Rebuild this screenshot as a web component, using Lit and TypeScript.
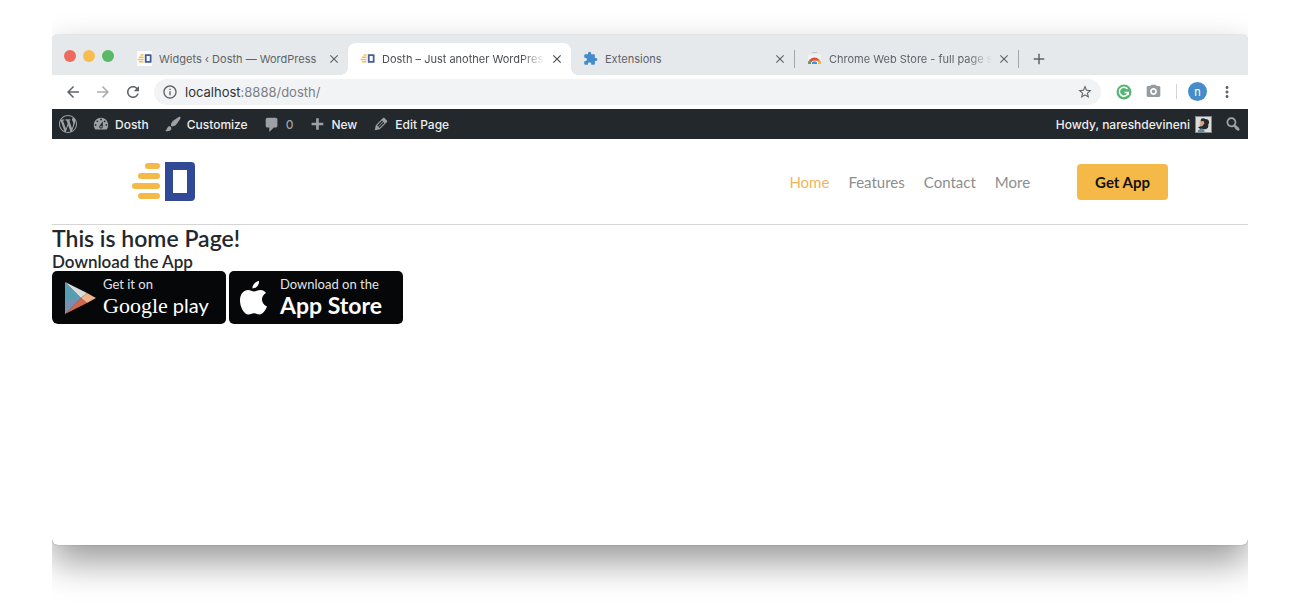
import { LitElement, html, css, svg } from "lit";
import { customElement } from "lit/decorators.js";

const paths = {
  back: "M20 11H7.83l5.59-5.59L12 4l-8 8 8 8 1.41-1.41L7.83 13H20v-2z",
  forward: "M12 4l-1.41 1.41L16.17 11H4v2h12.17l-5.58 5.59L12 20l8-8z",
  reload: "M17.65 6.35C16.2 4.9 14.21 4 12 4c-4.42 0-7.99 3.58-7.99 8s3.57 8 7.99 8c3.73 0 6.84-2.55 7.73-6h-2.08c-.82 2.33-3.04 4-5.65 4-3.31 0-6-2.69-6-6s2.69-6 6-6c1.66 0 3.14.69 4.22 1.78L13 11h7V4l-2.35 2.35z",
  info: "M11 17h2v-6h-2v6zm1-15C6.48 2 2 6.48 2 12s4.48 10 10 10 10-4.48 10-10S17.52 2 12 2zm0 18c-4.41 0-8-3.59-8-8s3.59-8 8-8 8 3.59 8 8-3.59 8-8 8zM11 9h2V7h-2v2z",
  star: "M22 9.24l-7.19-.62L12 2 9.19 8.63 2 9.24l5.46 4.73L5.82 21 12 17.27 18.18 21l-1.63-7.03L22 9.24zM12 15.4l-3.76 2.27 1-4.28-3.32-2.88 4.38-.38L12 6.1l1.71 4.04 4.38.38-3.32 2.88 1 4.28L12 15.4z",
  camera: "M9 2L7.17 4H4c-1.1 0-2 .9-2 2v12c0 1.1.9 2 2 2h16c1.1 0 2-.9 2-2V6c0-1.1-.9-2-2-2h-3.17L15 2H9zm3 15c-2.76 0-5-2.24-5-5s2.24-5 5-5 5 2.24 5 5-2.24 5-5 5zM12 9.500a2.500 2.500 0 1 0 0 5a2.500 2.500 0 1 0 0-5z",
  puzzle: "M20.5 11H19V7c0-1.100-.9-2-2-2h-4V3.500a2.500 2.500 0 0 0-5 0V5H4c-1.100 0-2 .9-2 2v3.800h1.500c1.500 0 2.700 1.200 2.700 2.700S5 16.200 3.500 16.200H2V20c0 1.100.9 2 2 2h3.800v-1.500c0-1.500 1.200-2.700 2.700-2.700s2.700 1.200 2.700 2.700V22H17c1.100 0 2-.9 2-2v-4h1.500a2.500 2.500 0 0 0 0-5z",
  close: "M19 6.410L17.590 5 12 10.590 6.410 5 5 6.410 10.590 12 5 17.590 6.410 19 12 13.410 17.590 19 19 17.590 13.410 12z",
  add: "M19 13h-6v6h-2v-6H5v-2h6V5h2v6h6v2z",
  menu: "M12 8c1.100 0 2-.9 2-2s-.9-2-2-2-2 .9-2 2 .9 2 2 2zm0 2c-1.100 0-2 .9-2 2s.9 2 2 2 2-.9 2-2-.9-2-2-2zm0 6c-1.100 0-2 .9-2 2s.9 2 2 2 2-.9 2-2-.9-2-2-2z",
};

const dashicons = {
  wordpress: "M20 10c0-5.51-4.49-10-10-10C4.48 0 0 4.49 0 10c0 5.52 4.48 10 10 10 5.51 0 10-4.48 10-10zM7.78 15.37L4.37 6.22c.55-.02 1.17-.08 1.17-.08.5-.06.44-1.13-.06-1.11 0 0-1.45.11-2.37.11-.18 0-.37 0-.58-.01C4.12 2.69 6.87 1.11 10 1.11c2.33 0 4.45.87 6.05 2.34-.68-.11-1.65.39-1.65 1.58 0 .74.45 1.36.9 2.1.35.61.55 1.36.55 2.46 0 1.49-1.4 5-1.4 5l-3.03-8.37c.54-.02.82-.17.82-.17.5-.05.44-1.25-.06-1.22 0 0-1.44.12-2.38.12-.87 0-2.33-.12-2.33-.12-.5-.03-.56 1.2-.06 1.22l.92.08 1.26 3.41zM17.41 10c.24-.64.74-1.87.43-4.25.7 1.29 1.05 2.71 1.05 4.25 0 3.29-1.73 6.24-4.4 7.78.97-2.59 1.94-5.2 2.92-7.78zM6.1 18.09C3.12 16.65 1.11 13.53 1.11 10c0-1.3.23-2.48.72-3.59C3.25 10.3 4.67 14.2 6.1 18.09zm4.03-6.63l2.58 6.98c-.86.29-1.76.45-2.71.45-.79 0-1.57-.11-2.29-.33.81-2.38 1.62-4.74 2.42-7.1z",
  dashboard: "M3.76 16h12.48c1.1-1.37 1.76-3.11 1.76-5 0-4.42-3.58-8-8-8s-8 3.58-8 8c0 1.89.66 3.63 1.76 5zM10 4c.55 0 1 .45 1 1s-.45 1-1 1-1-.45-1-1 .45-1 1-1zM6 6c.55 0 1 .45 1 1s-.45 1-1 1-1-.45-1-1 .45-1 1-1zm8 0c.55 0 1 .45 1 1s-.45 1-1 1-1-.45-1-1 .45-1 1-1zm-5.37 5.55L12 7v6c0 1.1-.9 2-2 2s-2-.9-2-2c0-.57.24-1.08.63-1.45zM4 10c.55 0 1 .45 1 1s-.45 1-1 1-1-.45-1-1 .45-1 1-1zm12 0c.55 0 1 .45 1 1s-.45 1-1 1-1-.45-1-1 .45-1 1-1zm-5 3c0-.55-.45-1-1-1s-1 .45-1 1 .45 1 1 1 1-.45 1-1z",
  brush: "M18.33 3.57s.27-.8-.31-1.36c-.53-.52-1.22-.24-1.22-.24-.61.3-5.76 3.47-7.67 5.57-.86.96-2.06 3.79-1.09 4.82.92.98 3.96-.17 4.79-1 2.06-2.06 5.21-7.17 5.5-7.79zM1.4 17.65c2.37-1.56 1.46-3.41 3.23-4.64.93-.65 2.22-.62 3.08.29.63.67.8 2.57-.16 3.46-1.57 1.45-4 1.55-6.15.89z",
  comment: "M5 3h9c1.1 0 2 .9 2 2v7c0 1.1-.9 2-2 2h-2l-5 5v-5H5c-1.1 0-2-.9-2-2V5c0-1.1.9-2 2-2z",
  plus: "M17 8.500v3h-5v5H9v-5H4v-3h5v-5h3v5h5z",
  edit: "M13.89 3.39l2.71 2.72c.46.46.42 1.24.03 1.64l-8.01 8.02-5.56 1.16 1.16-5.58s7.6-7.63 7.99-8.03c.39-.39 1.22-.39 1.68.07zm-2.73 2.79l-5.59 5.61 1.11 1.11 5.54-5.65zm-2.97 8.23l5.58-5.6-1.07-1.08-5.59 5.6z",
  search: "M12.14 4.18c1.87 1.87 2.11 4.75.72 6.89.12.1.22.21.36.31.2.16.47.36.81.59.34.24.56.39.66.47.42.31.73.57.94.78.32.32.6.65.84 1 .25.35.44.69.59 1.04.14.35.21.68.18 1-.02.32-.14.59-.36.81s-.49.34-.81.36c-.31.02-.65-.04-.99-.19-.35-.14-.7-.34-1.04-.59-.35-.24-.68-.52-1-.84-.21-.21-.47-.52-.77-.93-.1-.13-.25-.35-.47-.66-.22-.32-.4-.57-.56-.78-.16-.2-.29-.35-.44-.5-2.07 1.09-4.69.76-6.44-.98-2.14-2.15-2.14-5.64 0-7.78 2.15-2.15 5.63-2.15 7.78 0zm-1.41 6.36c1.36-1.37 1.36-3.58 0-4.95-1.37-1.37-3.59-1.37-4.95 0-1.37 1.37-1.37 3.58 0 4.95 1.36 1.37 3.58 1.37 4.95 0z",
};

const icon = (name: keyof typeof paths, size = 18) =>
  html`<svg width=${size} height=${size} viewBox="0 0 24 24" fill="currentColor" aria-hidden="true"><path d=${paths[name]} /></svg>`;

const dash = (name: keyof typeof dashicons, size = 18) =>
  html`<svg width=${size} height=${size} viewBox="0 0 20 20" fill="currentColor" fill-rule="evenodd" aria-hidden="true"><path d=${dashicons[name]} /></svg>`;

const logoShapes = svg`
  <g fill="#f5b947">
    <rect x="13" y="1" width="15" height="6" rx="3" />
    <rect x="6" y="11" width="22" height="6" rx="3" />
    <rect x="0" y="21" width="28" height="6" rx="3" />
    <rect x="6" y="31" width="22" height="6" rx="3" />
  </g>
  <path fill="#304a98" fill-rule="evenodd" d="M33 0h26a4 4 0 0 1 4 4v31a4 4 0 0 1-4 4H33zM41 8v23h14V8z" />`;

const sharedStyles = css`
  * { box-sizing: border-box; }
  svg { display: block; flex: none; }
  button { border: 0; padding: 0; margin: 0; background: none; font: inherit; color: inherit; cursor: pointer; }
  a { color: inherit; text-decoration: none; }
`;

@customElement("browser-chrome")
class BrowserChrome extends LitElement {
  static styles = [sharedStyles, css`
    :host { display: block; font-family: Inter, "Liberation Sans", sans-serif; color: #5f6368; }
    .strip { display: flex; height: 40px; background: #e6e9eb; padding: 8px 0 0 12px; }
    .lights { display: flex; flex: none; gap: 7px; padding-top: 7px; width: 61px; }
    .light { width: 12px; height: 12px; border-radius: 50%; }
    .red { background: #ed6a5e; }
    .yellow { background: #f5bd4f; }
    .green { background: #5ab966; }
    .tab { position: relative; display: flex; align-items: center; width: 223px; height: 32px; padding: 0 7px 1px 12px; font-size: 11px; }
    .active { background: #fff; border-radius: 8px 8px 0 0; color: #4a4d51; }
    .active::before, .active::after { content: ""; position: absolute; bottom: 0; width: 8px; height: 8px; }
    .active::before { right: 100%; background: radial-gradient(circle at 0 0, transparent 8px, #fff 8px); }
    .active::after { left: 100%; background: radial-gradient(circle at 100% 0, transparent 8px, #fff 8px); }
    .label { flex: 1; min-width: 0; margin: 0 5px 0 7px; white-space: nowrap; }
    .faded { -webkit-mask-image: linear-gradient(to left, transparent, #000 24px); mask-image: linear-gradient(to left, transparent, #000 24px); }
    .divider { width: 1px; height: 18px; margin-top: 7px; background: #a5a8ab; }
    .new { display: flex; align-items: center; padding: 0 11px; }
    .favicon { background: #fff; }
    .toolbar { display: flex; align-items: center; height: 34px; padding: 0 12px 1px; background: #fff; }
    .nav { display: flex; gap: 12px; margin-right: 12px; }
    .forward { color: #a9acaf; }
    .address { flex: 1; display: flex; align-items: center; height: 26px; border-radius: 13px; background: #f1f3f4; padding: 0 8px; }
    .url { flex: 1; min-width: 0; margin-left: 7px; font-size: 13px; line-height: 26px; color: #7c8084; }
    .host { color: #303236; }
    .extensions { display: flex; align-items: center; gap: 14px; margin-left: 15px; }
    .rule { width: 1px; height: 15px; background: #d2d4d6; }
    .profile { display: grid; place-items: center; width: 19px; height: 19px; border-radius: 50%; background: #468ccb; color: #fff; font-size: 11px; }
    .tools-end { display: flex; align-items: center; gap: 11px; margin-left: 1px; }
  `];

  private favicon() {
    return html`<svg class="favicon" width="15" height="15" viewBox="-2 -14 67 67" opacity="0.9" aria-hidden="true">${logoShapes}</svg>`;
  }

  private store() {
    return html`<svg width="15" height="15" viewBox="0 0 15 15" aria-hidden="true">
      <path d="M5 1.500h5" stroke="#c3c6c8" fill="none" /><path d="M1 3.500h13v7H1z" fill="#eff1f2" />
      <path d="M1 13a6.500 6.500 0 0 1 13 0z" fill="#d85140" />
      <path d="M1 13a6.500 6.500 0 0 1 1.500-4.200L6 13z" fill="#58a55c" />
      <path d="M9 9.500h4a6.500 6.500 0 0 1 1 3.500H8z" fill="#f1bd42" />
      <path d="M4 13a3.500 3.500 0 0 1 7 0z" fill="#fff" /><path d="M4.800 13a2.700 2.700 0 0 1 5.400 0z" fill="#4a89e8" />
    </svg>`;
  }

  private tab(mark: unknown, title: string, active = false, faded = false) {
    return html`<div class="tab ${active ? "active" : ""}" role="tab" aria-selected=${active}>
      ${mark}<span class="label ${faded ? "faded" : ""}">${title}</span>
      <button aria-label="Close tab">${icon("close", 14)}</button>
    </div>`;
  }

  render() {
    return html`
      <div class="strip" role="tablist">
        <div class="lights"><span class="light red"></span><span class="light yellow"></span><span class="light green"></span></div>
        ${this.tab(this.favicon(), "Widgets ‹ Dosth — WordPress")}
        ${this.tab(this.favicon(), "Dosth – Just another WordPres", true, true)}
        ${this.tab(html`<svg width="15" height="15" viewBox="0 0 24 24" fill="#438bc9" aria-hidden="true"><path d=${paths.puzzle} /></svg>`, "Extensions")}
        <span class="divider"></span>
        ${this.tab(this.store(), "Chrome Web Store - full page s", false, true)}
        <span class="divider"></span>
        <button class="new" aria-label="New tab">${icon("add")}</button>
      </div>
      <div class="toolbar">
        <div class="nav">
          <button aria-label="Back">${icon("back")}</button>
          <button class="forward" aria-label="Forward">${icon("forward")}</button>
          <button aria-label="Reload">${icon("reload")}</button>
        </div>
        <div class="address">
          ${icon("info", 16)}
          <span class="url"><span class="host">localhost</span>:8888/dosth/</span>
          <button aria-label="Bookmark">${icon("star", 16)}</button>
        </div>
        <div class="extensions">
          <svg width="16" height="16" viewBox="0 0 16 16" aria-hidden="true"><circle cx="8" cy="8" r="7.500" fill="#55b575" /><path d="M11.500 5A4.500 4.500 0 1 0 12.300 8.500H8.500M12.300 8.500v2.500" stroke="#fff" stroke-width="1.500" fill="none" /></svg>
          <svg width="15" height="15" viewBox="1 1 22 22" fill="#979b9f" fill-rule="evenodd" aria-hidden="true"><path d=${paths.camera} /></svg>
          <div class="tools-end">
            <span class="rule"></span>
            <button class="profile" aria-label="Profile">n</button>
            <button aria-label="Menu">${icon("menu")}</button>
          </div>
        </div>
      </div>`;
  }
}

@customElement("admin-bar")
class AdminBar extends LitElement {
  static styles = [sharedStyles, css`
    :host { display: block; font-family: Inter, "Liberation Sans", sans-serif; }
    .bar { display: flex; justify-content: space-between; align-items: center; height: 30px; padding: 0 6px 0 7px; background: #23282d; color: #eee; font-size: 12px; font-weight: 500; }
    .group { display: flex; align-items: center; gap: 15px; }
    .account { gap: 12px; }
    .item { display: flex; align-items: center; gap: 5px; }
    .item svg, .muted { color: #9ca1a6; }
    .avatar { border: 1px solid #82878c; }
  `];

  render() {
    return html`<nav class="bar" aria-label="Toolbar">
      <div class="group">
        <a class="item" href="#" aria-label="About WordPress">${dash("wordpress")}</a>
        <a class="item" href="#">${dash("dashboard")}Dosth</a>
        <a class="item" href="#">${dash("brush")}Customize</a>
        <a class="item muted" href="#">${dash("comment")}0</a>
        <a class="item" href="#">${dash("plus")}New</a>
        <a class="item" href="#">${dash("edit")}Edit Page</a>
      </div>
      <div class="group account">
        <a class="item" href="#">Howdy, nareshdevineni
          <svg class="avatar" width="17" height="17" viewBox="0 0 16 16" aria-hidden="true"><path fill="#dcdcd9" d="M0 0h16v16H0z" /><path fill="#26282e" d="M5 4c0-3 3-3 5-2 4 0 5 4 3 6 1 4-2 5-4 5H5l-3-2 5-2z" /><path fill="#d8a589" d="M4 5l4-1 1 3-3 3-2-1z" /><path fill="#5b8fa5" d="M2 14l4-2 3 2v2H2z" /></svg>
        </a>
        <button class="item" aria-label="Search">${dash("search")}</button>
      </div>
    </nav>`;
  }
}

@customElement("site-page")
class SitePage extends LitElement {
  static styles = [sharedStyles, css`
    :host { display: block; font-family: Lato, "Open Sans", sans-serif; color: #23282d; }
    .header { display: flex; align-items: center; justify-content: space-between; height: 86px; padding: 0 80px; border-bottom: 1px solid #d5d5d5; }
    .menu { display: flex; align-items: center; gap: 19px; font-size: 15px; color: #8b8e90; }
    .current { color: #f0b55a; }
    .cta { margin-left: 28px; padding: 0 18px; height: 36px; border-radius: 4px; background: #f5b947; color: #111; font-weight: 700; }
    h1 { margin: 0; font-size: 23px; line-height: 27px; font-weight: 600; }
    h2 { margin: 0; font-size: 17px; line-height: 19px; font-weight: 600; }
    .stores { display: flex; gap: 3px; }
    .store { display: flex; align-items: center; width: 174px; height: 53px; border-radius: 5px; background: #060708; color: #fff; }
    .words { display: flex; flex-direction: column; }
    .small { font-size: 13px; line-height: 15px; color: #e3e3e3; }
    .google { padding-left: 12px; gap: 7px; }
    .play { display: flex; align-items: baseline; gap: 5px; font-size: 20px; line-height: 26px; }
    .serif { font-family: "Liberation Serif", serif; font-size: 22px; }
    .apple { padding-left: 10px; gap: 12px; }
    .appstore { font-size: 23px; line-height: 26px; font-weight: 700; }
  `];

  render() {
    return html`
      <header class="header">
        <a href="#" aria-label="Dosth"><svg width="64" height="40" viewBox="0 0 64 40" aria-hidden="true">${logoShapes}</svg></a>
        <nav class="menu">
          <a class="current" href="#">Home</a><a href="#">Features</a><a href="#">Contact</a><a href="#">More</a>
          <button class="cta">Get App</button>
        </nav>
      </header>
      <main>
        <h1>This is home Page!</h1>
        <h2>Download the App</h2>
        <div class="stores">
          <a class="store google" href="#">
            <svg width="32" height="34" viewBox="0 0 32 34" aria-hidden="true">
              <path fill="#589db1" d="M1 1v32l16-16z" /><path fill="#7790b5" d="M1 20v13l16-16z" /><path fill="#d9dcd8" d="M1 1l22 11-6 5z" />
              <path fill="#cf6a50" d="M1 33l22-11-6-5z" /><path fill="#f0b28a" d="M23 12l9 5-9 5-6-5z" />
            </svg>
            <span class="words"><span class="small">Get it on</span><span class="play"><span class="serif">Google</span><span>play</span></span></span>
          </a>
          <a class="store apple" href="#">
            <svg width="29" height="34" viewBox="0 0 29 34" fill="#fff" aria-hidden="true">
              <path d="M20 0c.4 4-3 7.500-6.500 7.500C13 4 16.500.5 20 0zM27 12c-6 3.500-5 11 1 13.500-1.500 4-4.500 8-7.500 8-2 0-3-1.300-5.500-1.300S11.500 33.500 9.500 33.500C5 33.500 1 26 1 19.500 1 12.500 5 9 9 9c2.500 0 4.300 1.500 6 1.500S18.500 9 21.500 9c2 0 4.300 1.200 5.500 3z" />
            </svg>
            <span class="words"><span class="small">Download on the</span><span class="appstore">App Store</span></span>
          </a>
        </div>
      </main>`;
  }
}

@customElement("app-root")
class AppRoot extends LitElement {
  static styles = css`
    :host { display: block; box-sizing: border-box; min-height: 100vh; padding: 35px 52px 69px; background: #fff; }
    .window { min-height: calc(100vh - 104px); border-radius: 6px; background: #fff; box-shadow: 0 17px 36px rgba(0, 0, 0, 0.4), 0 0 1px rgba(0, 0, 0, 0.5); clip-path: inset(-35px 0 -69px 0); }
    .clip { border-radius: 6px; overflow: hidden; }
  `;

  render() {
    return html`<div class="window"><div class="clip">
      <browser-chrome></browser-chrome>
      <admin-bar></admin-bar>
      <site-page></site-page>
    </div></div>`;
  }
}
